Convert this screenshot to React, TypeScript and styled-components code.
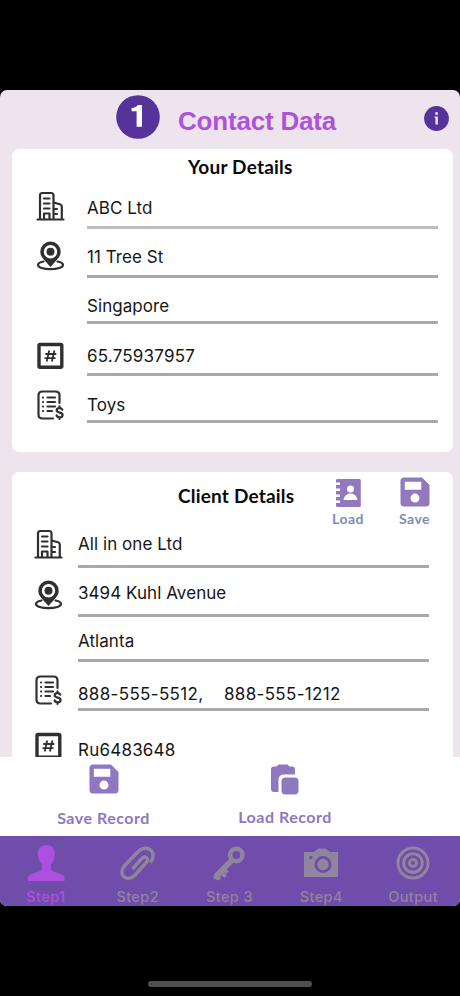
import React from "react";
import styled, { createGlobalStyle } from "styled-components";

const GlobalStyle = createGlobalStyle`
  * { box-sizing: border-box; }
  body { margin: 0; background: #000; }
`;

const Device = styled.div`
  width: 460px;
  height: 996px;
  padding-top: 90px;
  background: #000;
  display: flex;
  flex-direction: column;
  align-items: center;
  overflow: hidden;
`;

const Screen = styled.div`
  width: 460px;
  height: 816px;
  flex: none;
  border-radius: 7px;
  overflow: hidden;
  background: #eee4ed;
  display: flex;
  flex-direction: column;
`;

const HomeIndicator = styled.div`
  width: 164px;
  height: 6px;
  margin-top: 75px;
  border-radius: 3px;
  background: #4e4e4e;
`;

const Header = styled.header`
  height: 59px;
  flex: none;
  display: flex;
  align-items: flex-start;
  padding: 5px 11px 0 116px;
`;

const StepBadge = styled.svg`
  width: 44px;
  height: 44px;
`;

const PageTitle = styled.h1`
  flex: 1;
  margin: 10px 0 0 18px;
  font: bold 26px/32px "Liberation Sans", Arial, sans-serif;
  letter-spacing: -0.2px;
  color: #ae52dc;
  white-space: nowrap;
`;

const InfoButton = styled.button`
  width: 25px;
  height: 25px;
  margin: 11px 0 0;
  padding: 0;
  border: 0;
  background: none;
  svg { display: block; width: 25px; height: 25px; }
`;

const Content = styled.main`
  flex: 1;
  min-height: 0;
  overflow: hidden;
  display: flex;
  flex-direction: column;
  gap: 20px;
  padding: 0 7px 0 12px;
`;

const Card = styled.section<{ $height: number }>`
  height: ${(p) => p.$height}px;
  flex: none;
  border-radius: 7px;
  background: #fff;
`;

const CardHeader = styled.div<{ $height: number; $left: number }>`
  height: ${(p) => p.$height}px;
  display: flex;
  align-items: flex-start;
  padding-left: ${(p) => p.$left}px;
`;

const CardTitle = styled.h2<{ $top: number; $width: number }>`
  width: ${(p) => p.$width}px;
  margin: ${(p) => p.$top}px 0 0;
  font: bold 19px/24px Lato, sans-serif;
  letter-spacing: 0.2px;
  color: #0b0b0b;
  white-space: nowrap;
`;

const CardAction = styled.button<{ $width: number }>`
  width: ${(p) => p.$width}px;
  padding: 4px 0 0;
  border: 0;
  background: none;
  display: flex;
  flex-direction: column;
  align-items: center;
  gap: 2px;
  font: bold 14px/18px Lato, sans-serif;
  letter-spacing: 0.5px;
  color: #7c8db5;
  svg { width: 32px; height: 32px; }
`;

const Row = styled.div<{ $height: number; $client?: boolean }>`
  height: ${(p) => p.$height}px;
  display: flex;
  align-items: flex-end;
  padding: 0 ${(p) => (p.$client ? "24px 0 22px" : "15px 0 24px")};
`;

const IconSlot = styled.div<{ $lift: number; $client?: boolean }>`
  width: ${(p) => (p.$client ? 44 : 51)}px;
  flex: none;
  padding-bottom: ${(p) => p.$lift}px;
  svg { display: block; width: 30px; height: 32px; }
`;

const Field = styled.div<{ $height: number; $light?: boolean; $spacing?: number }>`
  flex: 1;
  height: ${(p) => p.$height}px;
  border-bottom: 3px solid ${(p) => (p.$light ? "#bcbcbc" : "#a9a9a9")};
  font: 17px/${(p) => p.$height - 3}px Inter, sans-serif;
  letter-spacing: ${(p) => p.$spacing ?? 0.06}px;
  color: #161616;
  white-space: pre;
`;

const ActionBar = styled.div`
  height: 79px;
  flex: none;
  display: flex;
  padding-left: 42px;
  background: #fff;
`;

const RecordAction = styled.button<{ $width: number; $gap: number }>`
  width: ${(p) => p.$width}px;
  padding: 6px 0 0;
  border: 0;
  background: none;
  display: flex;
  flex-direction: column;
  align-items: center;
  gap: ${(p) => p.$gap}px;
  font: bold 16px/20px Lato, sans-serif;
  letter-spacing: 0.5px;
  color: #8f78bf;
  white-space: nowrap;
  svg { width: 32px; height: 32px; }
`;

const TabBar = styled.nav`
  height: 70px;
  flex: none;
  display: grid;
  grid-template-columns: repeat(5, 91.8px);
  background: #704daa;
`;

const Tab = styled.button<{ $active?: boolean }>`
  padding: 7px 0 0;
  border: 0;
  background: none;
  display: flex;
  flex-direction: column;
  align-items: center;
  gap: 5px;
  font: 500 14.5px/18px Inter, sans-serif;
  letter-spacing: 0.4px;
  color: ${(p) => (p.$active ? "#ae50df" : "#91849d")};
  svg { width: 40px; height: 40px; flex: none; }
`;

const INK = "#303032";

const Building = () => (
  <svg viewBox="0 0 30 32" fill="none" stroke={INK} strokeWidth="2.2" strokeLinecap="round" strokeLinejoin="round">
    <path d="M1.500 30.500h26M4 30V6.500q0-2.500 2.500-2.500h8.500Q17.500 4 17.500 6.500v23.500M17.500 13.500l6.500 1.700q1.800.5 1.800 2.300V30M8 30v-5.500h5.500v5.500M8 9.500h5.500M8 14.500h5.500M8 19.500h5.500M18.500 20h2.500M18.500 25h2.500" />
  </svg>
);

const Pin = () => (
  <svg viewBox="0 0 30 32">
    <path fill={INK} fillRule="evenodd" d="M14.500 1.500A10.200 10.200 0 0 0 4.300 11.700c0 5.300 4.200 8.300 10.200 15.300 6-7 10.200-10 10.200-15.300A10.200 10.200 0 0 0 14.500 1.500Zm0 3.500a6.700 6.700 0 1 1 0 13.400 6.700 6.700 0 0 1 0-13.400Z" />
    <circle cx="14.500" cy="11.700" r="4" fill={INK} />
    <path fill="none" stroke={INK} strokeWidth="2.200" strokeLinecap="round" d="M7.500 21.500c-3.800.8-5.500 2-5.500 3.400 0 2.500 5.500 4.300 12.500 4.300S27 27.400 27 24.900c0-1.400-2-2.600-5.500-3.400" />
  </svg>
);

const Hash = () => (
  <svg viewBox="0 0 30 32" fill="none" stroke={INK}>
    <rect x="3" y="4.500" width="22.800" height="22.800" rx="1" strokeWidth="3.400" />
    <path strokeWidth="1.800" d="M13.200 10.500l-2.500 11M18.400 10.500l-2.500 11M9.300 14h11M8.500 18.200h11" />
  </svg>
);

const Invoice = () => (
  <svg viewBox="0 0 30 32" fill="none" stroke={INK} strokeWidth="2.200" strokeLinecap="round">
    <path d="M23.500 14V6.500q0-4-4-4H6.500q-4 0-4 4v19q0 4 4 4H17" />
    <path d="M7 8.500h.1M7 13h.1M7 17.500h.1M7 22h.1M11.500 8.500H19M11.500 13H19M11.500 17.500H19M11.500 22h4.500" />
    <path d="M26.300 20.700c-.5-1.200-1.500-1.600-2.800-1.600-1.700 0-2.800.8-2.800 2.200 0 3.200 5.900 1.500 5.900 4.700 0 1.500-1.300 2.300-3 2.300s-2.700-.7-3-2M23.500 17.300v1.500M23.500 28.500v1.500" />
  </svg>
);

const Floppy = ({ color = "#9279be" }: { color?: string }) => (
  <svg viewBox="0 0 32 32">
    <path fill={color} fillRule="evenodd" d="M5 1.500h18l7.500 7.500v18q0 3.500-3.500 3.500H5q-3.500 0-3.500-3.500V5Q1.500 1.500 5 1.500Zm.8 4.300v8h16.500v-8Zm10.200 11.800a4.500 4.500 0 1 0 0 9 4.500 4.500 0 0 0 0-9Z" />
  </svg>
);

const Contacts = () => (
  <svg viewBox="0 0 32 32">
    <path fill="#9279be" d="M5 3h22.500q1.300 0 1.300 1.300v25.400q0 1.300-1.300 1.300h-22q-1.500 0-1.500-1.500V27h4v-2.500H4V21h4v-2.500H4V15h4v-2.500H4V9h4V6.500H4v-2Q4 3 5 3Z" />
    <circle cx="18.500" cy="13" r="3.500" fill="#fff" />
    <path fill="#fff" d="M11.500 24c.5-4 3.500-6.500 7-6.500s6.500 2.500 7 6.500Z" />
  </svg>
);

const Paste = () => (
  <svg viewBox="0 0 32 32" fill="#8f78bf">
    <path d="M9.500 1.500h9l2 2H23q3 0 3 3V11.500H15q-5.500 0-5.500 5.500v12H5q-3 0-3-3V6.500q0-3 3-3h2.500Z" />
    <rect x="12.500" y="14.500" width="17" height="17" rx="4" />
  </svg>
);

const Person = () => (
  <svg viewBox="0 0 40 40" fill="#ae50df">
    <path d="M20.500 2c5.500 0 8.500 3.500 8.300 9-.2 5.500-2.300 8.500-4 10.500v3.500c0 2 1.200 3 4.200 4l6.500 2.200q3 1 3 3.300v3.500H2v-3.500q0-2.300 3-3.300l6.500-2.200c3-1 4.500-2 4.500-4V21.500c-2-2-4-5-4.200-10.500C11.600 5.500 15 2 20.500 2Z" />
  </svg>
);

const Clip = () => (
  <svg viewBox="0 0 40 40" fill="none" stroke="#91849d" strokeWidth="3.500">
    <path d="M32.500 19.500c3.200-4 3.500-9.500.3-12.300-3.700-3.200-8.800-2.500-12.500 1.300L7.200 22c-3.700 4-4.200 8.800-1.500 11.500 3 2.900 7.500 2.300 11.300-1.500l11.300-12.500c1.700-2 1.700-3.700.2-4.900-1.600-1.200-3.200-.6-4.800 1.100L14.500 26" />
  </svg>
);

const Key = () => (
  <svg viewBox="0 0 40 40">
    <circle cx="27.300" cy="12" r="6.200" fill="none" stroke="#91849d" strokeWidth="4.400" />
    <path fill="#91849d" d="M21 15l4 4-10 10.500 3 3-2.500 2.500-3-2.500-1.500 1.500 1 1.500-2.500 2-5-2 .5-4.200Z" />
    <path fill="#91849d" d="M15 24l4.800 4.500-2.500 2.500-4.500-3.500Z" />
  </svg>
);

const Camera = () => (
  <svg viewBox="0 0 40 40">
    <path fill="#91849d" fillRule="evenodd" d="M3 9h9.500l5-3.500h6.500l5 3.500h8v25H3Zm5.500 4v3h3v-3ZM22 13a8.500 8.500 0 1 0 0 17 8.500 8.500 0 0 0 0-17Zm0 2.800a5.700 5.700 0 1 1 0 11.400 5.700 5.700 0 0 1 0-11.400Z" />
  </svg>
);

const Target = () => (
  <svg viewBox="0 0 40 40" fill="none" stroke="#91849d" strokeWidth="3">
    <circle cx="20" cy="20" r="15" />
    <circle cx="20" cy="20" r="9.300" />
    <circle cx="20" cy="20" r="3.500" />
  </svg>
);

export default function App() {
  return (
    <>
      <GlobalStyle />
      <Device>
        <Screen>
          <Header>
            <StepBadge viewBox="0 0 44 44">
              <circle cx="22" cy="22" r="21.800" fill="#56329b" />
              <path d="M26 10v21.800h-5.400V16.300h-5v-3.400q4.900-.1 6.100-2.900Z" fill="#fff" />
            </StepBadge>
            <PageTitle>Contact Data</PageTitle>
            <InfoButton aria-label="Information">
              <svg viewBox="0 0 25 25">
                <circle cx="12.500" cy="12.500" r="12.400" fill="#56329b" />
                <path fill="#f4eff8" d="M11.300 6.300h2.500v2.400h-2.500ZM10.700 10.500h3.100v8h-2.300v-6.500h-.8Z" />
              </svg>
            </InfoButton>
          </Header>
          <Content>
            <Card $height={303}>
              <CardHeader $height={39} $left={176}>
                <CardTitle $top={6} $width={110}>Your Details</CardTitle>
              </CardHeader>
              <Row $height={41}><IconSlot $lift={8}><Building /></IconSlot><Field $height={39} $light>ABC Ltd</Field></Row>
              <Row $height={49}><IconSlot $lift={6}><Pin /></IconSlot><Field $height={39}>11 Tree St</Field></Row>
              <Row $height={46}><IconSlot $lift={0} /><Field $height={33}>Singapore</Field></Row>
              <Row $height={52}><IconSlot $lift={4}><Hash /></IconSlot><Field $height={37} $spacing={0.2}>65.75937957</Field></Row>
              <Row $height={47}><IconSlot $lift={2}><Invoice /></IconSlot><Field $height={33}>Toys</Field></Row>
            </Card>
            <Card $height={340}>
              <CardHeader $height={57} $left={166}>
                <CardTitle $top={12} $width={137}>Client Details</CardTitle>
                <CardAction $width={66}><Contacts />Load</CardAction>
                <CardAction $width={67}><Floppy />Save</CardAction>
              </CardHeader>
              <Row $height={39} $client><IconSlot $lift={9} $client><Building /></IconSlot><Field $height={44}>All in one Ltd</Field></Row>
              <Row $height={49} $client><IconSlot $lift={6} $client><Pin /></IconSlot><Field $height={44}>3494 Kuhl Avenue</Field></Row>
              <Row $height={45} $client><IconSlot $lift={0} $client /><Field $height={39}>Atlanta</Field></Row>
              <Row $height={49} $client><IconSlot $lift={5} $client><Invoice /></IconSlot><Field $height={31} $spacing={0.34}>{"888-555-5512,    888-555-1212"}</Field></Row>
              <Row $height={57} $client><IconSlot $lift={6} $client><Hash /></IconSlot><Field $height={33} $spacing={0.22}>Ru6483648</Field></Row>
            </Card>
          </Content>
          <ActionBar>
            <RecordAction $width={123} $gap={13}><Floppy color="#8f78bf" />Save Record</RecordAction>
            <RecordAction $width={240} $gap={12}><Paste />Load Record</RecordAction>
          </ActionBar>
          <TabBar>
            <Tab $active><Person />Step1</Tab>
            <Tab><Clip />Step2</Tab>
            <Tab><Key />Step 3</Tab>
            <Tab><Camera />Step4</Tab>
            <Tab><Target />Output</Tab>
          </TabBar>
        </Screen>
        <HomeIndicator />
      </Device>
    </>
  );
}
